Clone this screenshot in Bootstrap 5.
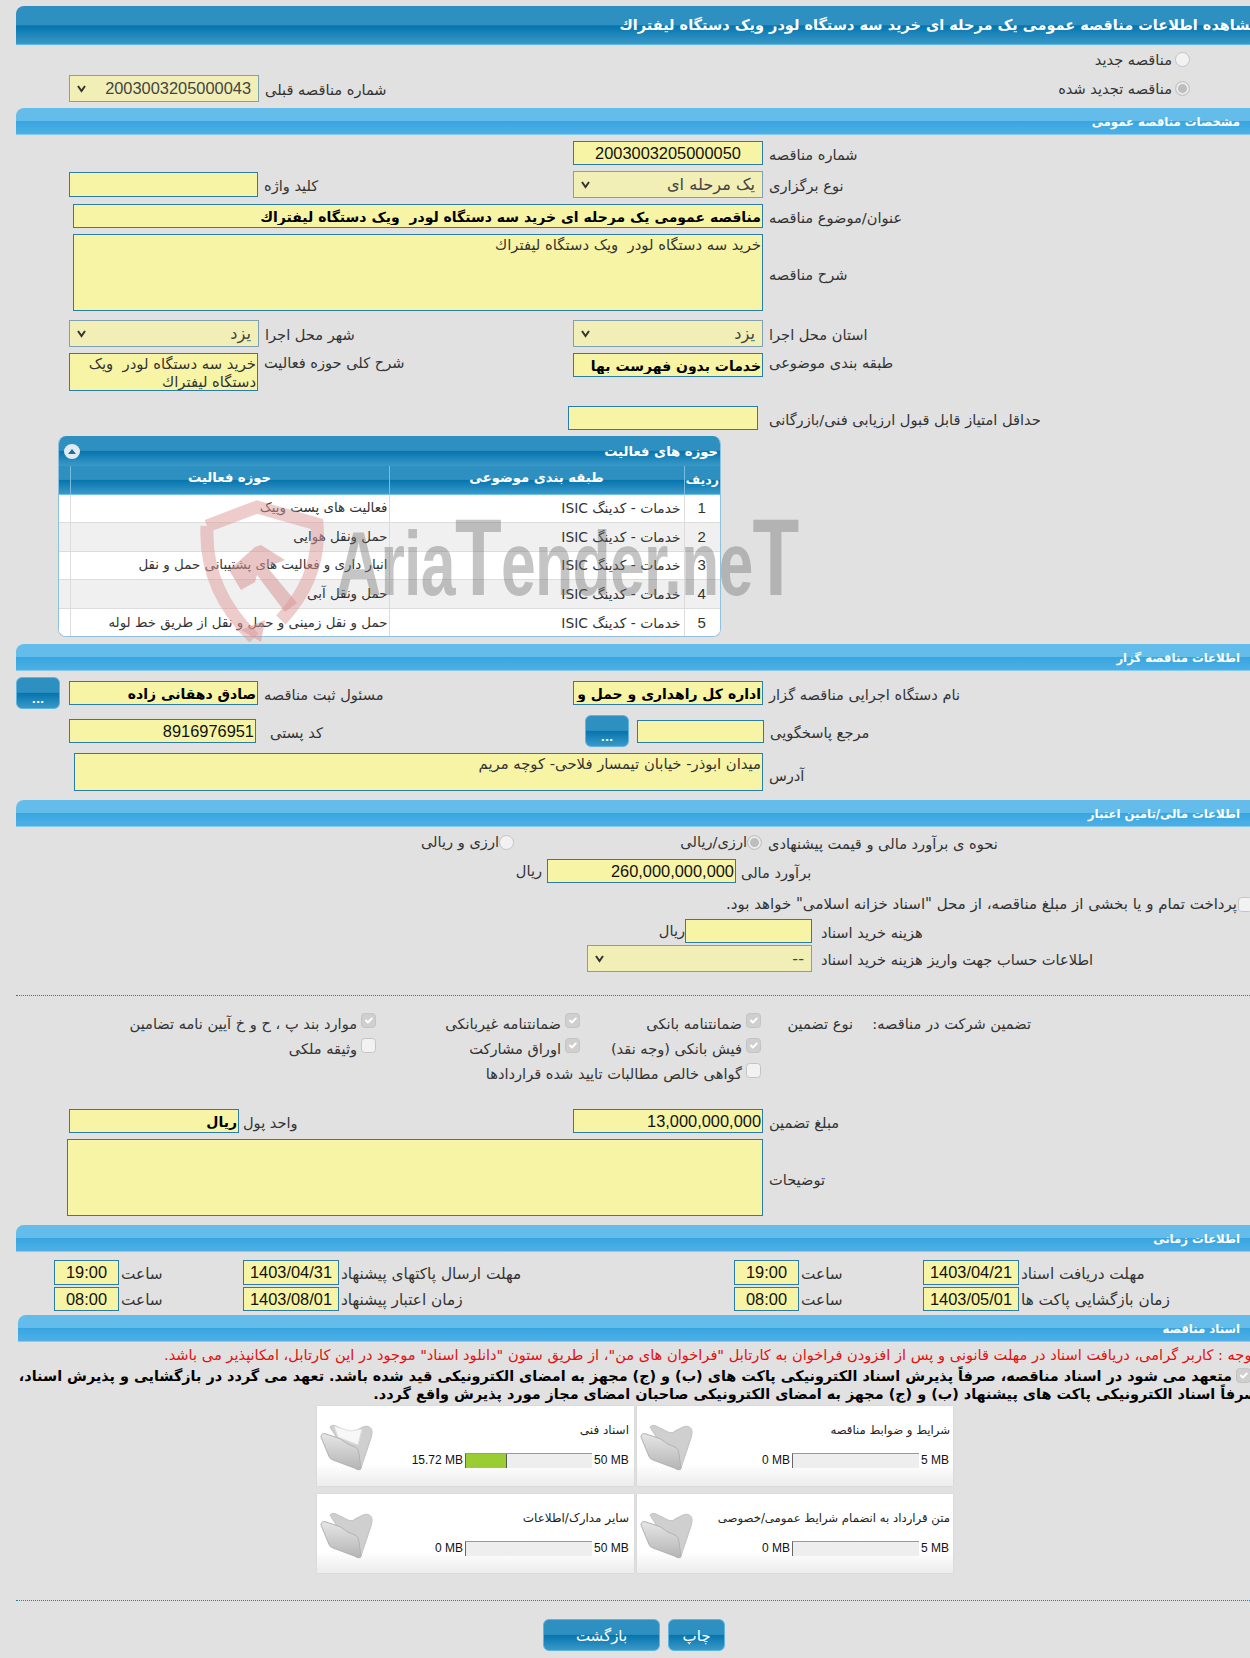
<!DOCTYPE html>
<html lang="fa">
<head>
<meta charset="utf-8">
<title>مشاهده اطلاعات مناقصه</title>
<link href="https://cdn.jsdelivr.net/npm/bootstrap@5.3.0/dist/css/bootstrap.min.css" rel="stylesheet">
<style>
html,body{margin:0;background:#e1e1e1;overflow:hidden}
body{font-family:"DejaVu Sans","Liberation Sans",sans-serif;font-size:14.6px;color:#333;line-height:1.2}
.pg{width:1250px;height:1658px;padding:6px 0 0 16px;overflow:hidden;position:relative}
.tbar{height:39px;border-top-left-radius:8px;background:linear-gradient(#2e90c0 0,#2e90c0 50%,#0574ad 52%,#3a99c8 100%);border-bottom:1px solid #5ab8ea;color:#fff;font-weight:700;font-size:14.5px;overflow:hidden;display:flex;justify-content:flex-end;align-items:center;white-space:nowrap;padding-top:2px}
.tbar span{margin-right:-9px}
.sbar{height:27px;border-top-left-radius:8px;background:linear-gradient(#64bcea 0,#64bcea 48%,#38a5e0 50%,#4db0e6 100%);border-bottom:1px solid #85cdf0;color:#fff;font-weight:700;font-size:11.7px;display:flex;justify-content:flex-end;align-items:center;padding:2px 10px 0 0}
.sbar5{margin-left:2px}
.fr{display:flex;align-items:stretch}
.sl{width:557px;padding-left:53px;display:flex;align-items:center;flex:none}
.sr{flex:1;display:flex;align-items:center}
.sl0{padding-left:0}
.ai-top{align-items:flex-start}
.lb{white-space:nowrap;margin-left:6px;margin-top:3px}
.ai-top .lb{margin-top:0;padding-top:1px}
.lbt{margin-top:5px}
.lba{margin-top:7px}
.form-control.fx,.form-select.fx{border-radius:0;padding:0 1px;min-height:0;background-color:#f7f5a5;border:1px solid #2a7cab;color:#111;font-size:14.8px;line-height:1.2;text-align:right;box-shadow:none;flex:none}
textarea.form-control.fx{resize:none;overflow:hidden;color:#333;padding-top:1px}
.form-control.num{font-family:"Liberation Sans",sans-serif;font-size:16.4px}
.form-control.bd{font-weight:700;font-size:14px;color:#000;padding-top:1px}
.form-select.fx{background-color:#f1efb6;border:1px solid #7f9fb5;color:#444;padding:1px 7px 0 20px;background-position:left 6px center;background-size:11px 9px;background-image:url("data:image/svg+xml,%3csvg xmlns='http://www.w3.org/2000/svg' viewBox='0 0 11 9'%3e%3cpath fill='none' stroke='%23333' stroke-width='2' d='M2 2l3.5 5L9 2'/%3e%3c/svg%3e");font-size:16.2px}
.form-select.num{font-family:"Liberation Sans",sans-serif;font-size:16.4px}
.w190{width:190px}.w189{width:189px}.w187{width:187px}.w170{width:170px}.w127{width:127px}.w225{width:225px}.w690{width:690px}.w689{width:689px}.w696{width:696px}.w96{width:96px}.w65{width:65px}
.h24{height:24px}.h25{height:25px}.h27{height:27px}.h32{height:32px}.h38{height:38px}.h77{height:77px}.h23{height:23px}
.m2{margin-top:2px}.m3{margin-top:3px}.m4{margin-top:4px}.m5{margin-top:5px}.m6{margin-top:6px}.m7{margin-top:7px}.m8{margin-top:8px}.m9{margin-top:9px}.m15{margin-top:15px}.m23b{margin-top:23px}.m23{margin-top:23px}.m27{margin-top:27px}
.rdo{display:flex;align-items:center;justify-content:flex-end;width:100%;padding-right:60px;gap:3px}
.form-check-input.ck{width:15px;height:15px;margin:0;flex:none;background-color:#f2f2f2;border:1px solid #c4c4c4;opacity:1}
.form-check-input.ck:checked{background-color:#cfcfcf;border-color:#c4c4c4}
.form-check-input.ck[type=radio]:checked{background-color:#bdbdbd;background-image:none;box-shadow:inset 0 0 0 2px #ececec}
.panel{margin-left:42px;width:663px;height:201px;border:1px solid #8fc1de;border-top:0;border-radius:8px;overflow:hidden;background:#fff}
.phead{height:30px;background:linear-gradient(#2e90c0 0,#2e90c0 48%,#0574ad 50%,#3a99c8 100%);color:#fff;font-weight:700;font-size:13.2px;display:flex;justify-content:space-between;align-items:center;padding:1px 2px 0 5px}
.pbtn{width:16px;height:15px;border-radius:50%;background:#dfeaf1;display:flex;align-items:center;justify-content:center}
.table.tb{margin:0;table-layout:fixed;width:661px;font-size:13.4px;--bs-table-bg:transparent;color:#333}
.tb th{height:28px;padding:0 0 4px;border-bottom:1px solid #6cc3ee;border-left:1px solid #79bbdd;background:linear-gradient(#2e90c0 0,#2e90c0 48%,#0574ad 50%,#3a99c8 100%);color:#fff;text-align:center;vertical-align:middle;font-size:13.2px}
.tb th:last-child{font-size:12.6px;padding:0 0 1px}
.tb th:first-child,.tb td:first-child{border-left:0}
.tb td{height:28.6px;padding:0 1px 0 0;border-bottom:1px solid #dcdcdc;border-left:1px solid #dcdcdc;vertical-align:middle;text-align:right;background:#fff;white-space:nowrap}
.tb tr:nth-child(even) td{background:#f0f0f0}
.tb tr:last-child td{border-bottom:0}
.tb .c0{width:11px}.tb .c1{width:319px}.tb .c2{width:295px}
.tb td.isic{font-size:13.8px;padding-right:3px}
.tb td.n{text-align:center;font-family:"Liberation Sans",sans-serif;font-size:15px}
.wm{position:absolute;left:199px;top:500px;width:610px;height:142px;pointer-events:none;z-index:5}
.wm svg{position:absolute;left:0;top:0}
.wmt{position:absolute;left:137px;top:12px;font:700 90px/1 "Liberation Sans",sans-serif;color:rgba(110,110,110,.4);white-space:nowrap;transform-origin:0 0;transform:scaleX(.695);letter-spacing:-1px}
.wmt span{font-size:110px;line-height:90px}
.btn.btnx{width:44px;height:32px;padding:12px 0 0;border-radius:6px;border:1px solid #5db5e0;background:linear-gradient(#2e90c0 0,#2e90c0 48%,#0574ad 50%,#3a99c8 100%);color:#fff;font-weight:700;font-size:11px;line-height:1;flex:none}
.rw{display:flex;align-items:center}
.pl405{padding-left:405px}.pl502{padding-left:502px}.pl646{padding-left:646px}.pl571{padding-left:571px}.pl552{padding-left:552px}.pl57{padding-left:57px}.pl58{padding-left:58px}.pl51{padding-left:51px}
.t78{width:78px;text-align:right;flex:none}
.sp1{width:167px;flex:none}
.t66{width:66px;text-align:right;flex:none}
.t24{width:24px;text-align:right;flex:none}
.t23{width:23px;text-align:right;flex:none}
.ml3{margin-left:3px}.ml4{margin-left:4px}.ml5{margin-left:5px}.ml8{margin-left:8px}.ml9{margin-left:9px}.ml11{margin-left:11px}.ml12{margin-left:12px}.ml14{margin-left:14px}
.nw{white-space:nowrap}
.oneline{justify-content:flex-end;gap:1px;margin-right:-3px;font-size:15px}
.dots{border-top:1px dotted #1f7fb3;height:0}
.cg{display:grid;grid-template-columns:178px 92px 181px 204px 1fr;padding-right:219px;height:25px;align-items:center}
.cgf{margin-top:15px}
.ci{display:flex;align-items:center;gap:4px;white-space:nowrap}
.ci .ck{position:relative;top:-3px}
.tg{display:grid;grid-template-columns:189px 491px 189px 1fr;padding-left:38px}
.tc{display:flex;align-items:center}
.tc .lb{margin-left:2px;font-size:15.3px}
.form-control.tm{font-family:"Liberation Sans",sans-serif;font-size:16.4px;text-align:center;padding:0}
.red{color:#e01010;height:18px;margin-top:4px;white-space:nowrap;margin-right:-6px;text-align:right;font-size:14.6px;line-height:18px}
.para{font-weight:700;color:#000;font-size:14.4px;line-height:18px;height:36px;width:1236px;margin-left:6px;text-align:right;margin-top:3px;white-space:nowrap}
.para .ck{display:inline-block;vertical-align:-2px;margin-left:4px;margin-right:7px}
.cards{display:grid;grid-template-columns:317px 316px;grid-template-rows:80px 79px;gap:8px 3px;margin-left:301px;margin-top:3px;width:636px}
.card.dc{border:0;border-radius:0;background:linear-gradient(#fff 0,#fff 72%,#ececec 100%);box-shadow:0 0 2px #d0d0d0;position:relative;display:flex;flex-direction:row}
.dcf{width:62px;flex:none;padding:17px 0 0 3px}
.dcb{flex:1;padding-right:5px;min-width:0}
.dcbr{padding-right:3px}
.dcbr .dct{font-size:11.7px}
.dct{text-align:right;font-size:12px;color:#222;height:47px;padding-top:17px;white-space:nowrap}
.dcp{display:flex;align-items:center;font-family:"Liberation Sans",sans-serif;font-size:12px;color:#111;gap:2px;justify-content:flex-end}
.bar1.progress{width:127px;height:15px;border-radius:0;background:#eee;border-top:1px solid #999;border-left:1px solid #666;flex:none}
.bar1 .progress-bar{background:#9acd32;border-right:1px solid #555}
.bfill{width:41px}
.mk35{width:35px;flex:none}.mk29{width:29px;flex:none}
.foot{display:flex;gap:8px;margin-left:527px;margin-top:18px}
.btn.fb{height:32px;border-radius:6px;border:1px solid #5db5e0;background:linear-gradient(#2e90c0 0,#2e90c0 48%,#0574ad 50%,#3a99c8 100%);color:#fff;font-size:15px;padding:3px 0 0;display:flex;align-items:center;justify-content:center}
.w117{width:117px}.w57{width:57px}
</style>
</head>
<body>
<svg width="0" height="0" class="d-block">
  <defs>
    <linearGradient id="fg" x1="0" y1="0" x2="0" y2="1"><stop offset="0" stop-color="#e6e6e6"/><stop offset="1" stop-color="#b4b4b4"/></linearGradient>
    <symbol id="fold" viewBox="0 0 54 48">
      <path d="M10 4 C12 2 14 2 16 3 L28 9 C31 10 33 10 35 8 L43 4 C47 2 52 4 52 9 C52 13 51 15 50 18 L41 45 C40 47 38 47 36 46 Z" fill="#cfcfcf" stroke="#c2c2c2"/>
      <path d="M1 14 C1 11 3 10 6 11 L18 15 C22 16 24 19 28 21 L35 24 C38 26 39 28 39 31 L41 45 C41 47 39 47 37 46 L13 37 C10 36 9 34 8 31 Z" fill="url(#fg)" stroke="#b2b2b2"/>
    </symbol>
  </defs>
</svg>
<div class="pg">
  <div class="wm">
    <svg width="130" height="142" viewBox="0 0 130 142">
      <path d="M8 26 L58 7 L118 24 C121 60 108 92 82 120 M8 26 C6 70 24 108 55 138" fill="none" stroke="#dd9a9a" stroke-opacity=".5" stroke-width="13"/>
      <path d="M30 70 L56 47 L62 45 L86 60 L68 67 L98 103 L86 112 L58 75 L56 82 L42 90 Z" fill="#d99595" fill-opacity=".55"/>
      <path d="M42 130 L66 120 L62 142 Z" fill="#d99595" fill-opacity=".55"/>
    </svg>
    <div class="wmt">Aria<span>T</span>ender.ne<span>T</span></div>
  </div>

  <div class="tbar"><span dir="rtl">مشاهده اطلاعات مناقصه عمومی یک مرحله ای خرید سه دستگاه لودر ویک دستگاه لیفتراك</span></div>

  <div class="fr m2 h25"><div class="sl"></div><div class="sr"><div class="rdo"><span dir="rtl">مناقصه جدید</span><input class="form-check-input ck" type="radio" disabled></div></div></div>
  <div class="fr m3 h27"><div class="sl"><select class="form-select fx num w190 h27" dir="rtl" disabled><option>2003003205000043</option></select><span class="lb" dir="rtl">شماره مناقصه قبلی</span></div><div class="sr"><div class="rdo"><span dir="rtl">مناقصه تجدید شده</span><input class="form-check-input ck" type="radio" checked disabled></div></div></div>

  <div class="sbar m6"><span dir="rtl">مشخصات مناقصه عمومی</span></div>

  <div class="fr m6 h24"><div class="sl"></div><div class="sr"><input class="form-control fx num tm w190 h24" readonly value="2003003205000050"><span class="lb" dir="rtl">شماره مناقصه</span></div></div>
  <div class="fr m6 h27"><div class="sl"><input class="form-control fx w189 h25" readonly><span class="lb" dir="rtl">کلید واژه</span></div><div class="sr"><select class="form-select fx w190 h27" dir="rtl" disabled><option>یک مرحله ای</option></select><span class="lb" dir="rtl">نوع برگزاری</span></div></div>
  <div class="rw m6 h24 pl57"><input class="form-control fx bd w690 h24" dir="rtl" readonly value="مناقصه عمومی یک مرحله ای خرید سه دستگاه لودر  ویک دستگاه لیفتراك"><span class="lb" dir="rtl">عنوان/موضوع مناقصه</span></div>
  <div class="rw m6 h77 pl57"><textarea class="form-control fx w690 h77" dir="rtl" readonly>خرید سه دستگاه لودر  ویک دستگاه لیفتراك</textarea><span class="lb lbt" dir="rtl">شرح مناقصه</span></div>
  <div class="fr m9 h27"><div class="sl"><select class="form-select fx w190 h27" dir="rtl" disabled><option>یزد</option></select><span class="lb" dir="rtl">شهر محل اجرا</span></div><div class="sr"><select class="form-select fx w190 h27" dir="rtl" disabled><option>یزد</option></select><span class="lb" dir="rtl">استان محل اجرا</span></div></div>
  <div class="fr m6 h38"><div class="sl ai-top"><textarea class="form-control fx w189 h38" dir="rtl" readonly>خرید سه دستگاه لودر  ویک دستگاه لیفتراك</textarea><span class="lb" dir="rtl">شرح کلی حوزه فعالیت</span></div><div class="sr ai-top"><input class="form-control fx bd w190 h24" dir="rtl" readonly value="خدمات بدون فهرست بها"><span class="lb" dir="rtl">طبقه بندی موضوعی</span></div></div>
  <div class="rw m15 h24 pl552"><input class="form-control fx w190 h24" readonly><span class="lb ml11" dir="rtl">حداقل امتیاز قابل قبول ارزیابی فنی/بازرگانی</span></div>

  <div class="panel m6">
    <div class="phead"><span class="pbtn"><svg width="10" height="7" viewBox="0 0 10 7"><path d="M5 1 L9 6 H1 Z" fill="#1a6f9f"/></svg></span><span dir="rtl">حوزه های فعالیت</span></div>
    <table class="table tb">
      <thead><tr><th class="c0"></th><th class="c1">حوزه فعالیت</th><th class="c2">طبقه بندی موضوعی</th><th>ردیف</th></tr></thead>
      <tbody>
        <tr><td></td><td dir="rtl">فعالیت های  پست وپیک</td><td class="isic" dir="rtl">خدمات - کدینگ ISIC</td><td class="n">1</td></tr>
        <tr><td></td><td dir="rtl">حمل ونقل هوایی</td><td class="isic" dir="rtl">خدمات - کدینگ ISIC</td><td class="n">2</td></tr>
        <tr><td></td><td dir="rtl">انبار داری و فعالیت های پشتیبانی حمل و نقل</td><td class="isic" dir="rtl">خدمات - کدینگ ISIC</td><td class="n">3</td></tr>
        <tr><td></td><td dir="rtl">حمل ونقل آبی</td><td class="isic" dir="rtl">خدمات - کدینگ ISIC</td><td class="n">4</td></tr>
        <tr><td></td><td dir="rtl">حمل و نقل زمینی و حمل و نقل از طریق خط لوله</td><td class="isic" dir="rtl">خدمات - کدینگ ISIC</td><td class="n">5</td></tr>
      </tbody>
    </table>
  </div>

  <div class="sbar m7"><span dir="rtl">اطلاعات مناقصه گزار</span></div>

  <div class="fr m6 h32"><div class="sl sl0"><button class="btn btnx" type="button">...</button><input class="form-control fx bd w189 h24 ml9" dir="rtl" readonly value="صادق دهقانی زاده"><span class="lb" dir="rtl">مسئول ثبت مناقصه</span></div><div class="sr"><input class="form-control fx bd w190 h24" dir="rtl" readonly value="اداره کل راهداری و حمل و نقل جاده ای استان یزد"><span class="lb" dir="rtl">نام دستگاه اجرایی مناقصه گزار</span></div></div>
  <div class="fr m6 h32"><div class="sl"><input class="form-control fx num w187 h24" readonly value="8916976951"><span class="lb ml14" dir="rtl">کد پستی</span></div><div class="sr"><button class="btn btnx ml12" type="button">...</button><input class="form-control fx w127 h23 ml8" readonly><span class="lb" dir="rtl">مرجع پاسخگویی</span></div></div>
  <div class="rw m6 h38 pl58"><textarea class="form-control fx w689 h38" dir="rtl" readonly>میدان ابوذر- خیابان تیمسار فلاحی- کوچه مریم</textarea><span class="lb lba" dir="rtl">آدرس</span></div>

  <div class="sbar m9"><span dir="rtl">اطلاعات مالی/تامین اعتبار</span></div>

  <div class="rw m3 h24 pl405"><span class="t78 nw" dir="rtl">ارزی و ریالی</span><input class="form-check-input ck ml3" type="radio" disabled><span class="sp1"></span><span class="t66 nw" dir="rtl">ارزی/ریالی</span><input class="form-check-input ck ml4" type="radio" checked disabled><span class="lb" dir="rtl">نحوه ی برآورد مالی و قیمت پیشنهادی</span></div>
  <div class="rw m5 h24 pl502"><span class="t24" dir="rtl">ریال</span><input class="form-control fx num w189 h24 ml5" readonly value="260,000,000,000"><span class="lb ml5" dir="rtl">برآورد مالی</span></div>
  <div class="rw m9 h24 oneline"><span dir="rtl">پرداخت تمام و یا بخشی از مبلغ مناقصه، از محل "اسناد خزانه اسلامی" خواهد بود.</span><input class="form-check-input ck" type="checkbox" disabled></div>
  <div class="rw m3 h24 pl646"><span class="t23" dir="rtl">ریال</span><input class="form-control fx w127 h24" readonly><span class="lb ml9" dir="rtl">هزینه خرید اسناد</span></div>
  <div class="rw m2 h27 pl571"><select class="form-select fx w225 h27" dir="rtl" disabled><option>--</option></select><span class="lb ml9" dir="rtl">اطلاعات حساب جهت واریز هزینه خرید اسناد</span></div>

  <div class="dots m23"></div>

  <div class="cg cgf" dir="rtl">
    <span class="nw">تضمین شرکت در مناقصه:</span><span class="nw">نوع تضمین</span>
    <label class="ci"><input class="form-check-input ck" type="checkbox" checked disabled>ضمانتنامه بانکی</label>
    <label class="ci"><input class="form-check-input ck" type="checkbox" checked disabled>ضمانتنامه غیربانکی</label>
    <label class="ci"><input class="form-check-input ck" type="checkbox" checked disabled>موارد بند پ ، ح و خ آیین نامه تضامین</label>
  </div>
  <div class="cg" dir="rtl">
    <span></span><span></span>
    <label class="ci"><input class="form-check-input ck" type="checkbox" checked disabled>فیش بانکی (وجه نقد)</label>
    <label class="ci"><input class="form-check-input ck" type="checkbox" checked disabled>اوراق مشارکت</label>
    <label class="ci"><input class="form-check-input ck" type="checkbox" disabled>وثیقه ملکی</label>
  </div>
  <div class="cg" dir="rtl">
    <span></span><span></span>
    <label class="ci"><input class="form-check-input ck" type="checkbox" disabled>گواهی خالص مطالبات تایید شده قراردادها</label>
  </div>

  <div class="fr m23b h24"><div class="sl"><input class="form-control fx bd w170 h24" dir="rtl" readonly value="ریال"><span class="lb ml4" dir="rtl">واحد پول</span></div><div class="sr"><input class="form-control fx num w190 h24" readonly value="13,000,000,000"><span class="lb" dir="rtl">مبلغ تضمین</span></div></div>
  <div class="rw m6 h77 pl51"><textarea class="form-control fx w696 h77" dir="rtl" readonly></textarea><span class="lb lbt" dir="rtl">توضیحات</span></div>

  <div class="sbar m9"><span dir="rtl">اطلاعات زمانی</span></div>

  <div class="tg m8 h25">
    <div class="tc"><input class="form-control fx tm w65 h25" readonly value="19:00"><span class="lb" dir="rtl">ساعت</span></div>
    <div class="tc"><input class="form-control fx tm w96 h25" readonly value="1403/04/31"><span class="lb" dir="rtl">مهلت ارسال پاکتهای پیشنهاد</span></div>
    <div class="tc"><input class="form-control fx tm w65 h25" readonly value="19:00"><span class="lb" dir="rtl">ساعت</span></div>
    <div class="tc"><input class="form-control fx tm w96 h25" readonly value="1403/04/21"><span class="lb" dir="rtl">مهلت دریافت اسناد</span></div>
  </div>
  <div class="tg m2 h24">
    <div class="tc"><input class="form-control fx tm w65 h24" readonly value="08:00"><span class="lb" dir="rtl">ساعت</span></div>
    <div class="tc"><input class="form-control fx tm w96 h24" readonly value="1403/08/01"><span class="lb" dir="rtl">زمان اعتبار پیشنهاد</span></div>
    <div class="tc"><input class="form-control fx tm w65 h24" readonly value="08:00"><span class="lb" dir="rtl">ساعت</span></div>
    <div class="tc"><input class="form-control fx tm w96 h24" readonly value="1403/05/01"><span class="lb" dir="rtl">زمان بازگشایی پاکت ها</span></div>
  </div>

  <div class="sbar sbar5 m4"><span dir="rtl">اسناد مناقصه</span></div>

  <div class="red" dir="rtl">توجه : کاربر گرامی، دریافت اسناد در مهلت قانونی و پس از افزودن فراخوان به کارتابل "فراخوان های من"، از طریق ستون "دانلود اسناد" موجود در این کارتابل، امکانپذیر می باشد.</div>
  <div class="para" dir="rtl"><input class="form-check-input ck" type="checkbox" checked disabled>متعهد می شود در اسناد مناقصه، صرفاً پذیرش اسناد الکترونیکی پاکت های (ب) و (ج) مجهز به امضای الکترونیکی قید شده باشد. تعهد می گردد در بازگشایی و پذیرش اسناد،<br>صرفاً اسناد الکترونیکی پاکت های پیشنهاد (ب) و (ج) مجهز به امضای الکترونیکی صاحبان امضای مجاز مورد پذیرش واقع گردد.</div>

  <div class="cards">
    <div class="card dc"><div class="dcf"><svg width="54" height="48"><use href="#fold"/><path d="M14 3 L30 8 L42 6 L38 22 L18 14 Z" fill="#f7f7f7" stroke="#dedede"/></svg></div><div class="dcb"><div class="dct" dir="rtl">اسناد فنی</div><div class="dcp"><span>15.72 MB</span><div class="progress bar1"><div class="progress-bar bfill"></div></div><span class="mk35">50 MB</span></div></div></div>
    <div class="card dc"><div class="dcf"><svg width="54" height="48"><use href="#fold"/></svg></div><div class="dcb dcbr"><div class="dct" dir="rtl">شرایط و ضوابط مناقصه</div><div class="dcp"><span>0 MB</span><div class="progress bar1"></div><span class="mk29">5 MB</span></div></div></div>
    <div class="card dc"><div class="dcf"><svg width="54" height="48"><use href="#fold"/></svg></div><div class="dcb"><div class="dct" dir="rtl">سایر مدارک/اطلاعات</div><div class="dcp"><span>0 MB</span><div class="progress bar1"></div><span class="mk35">50 MB</span></div></div></div>
    <div class="card dc"><div class="dcf"><svg width="54" height="48"><use href="#fold"/></svg></div><div class="dcb dcbr"><div class="dct" dir="rtl">متن قرارداد به انضمام شرایط عمومی/خصوصی</div><div class="dcp"><span>0 MB</span><div class="progress bar1"></div><span class="mk29">5 MB</span></div></div></div>
  </div>

  <div class="dots m27"></div>

  <div class="foot"><button class="btn fb w117" type="button">بازگشت</button><button class="btn fb w57" type="button">چاپ</button></div>
</div>
</body>
</html>
